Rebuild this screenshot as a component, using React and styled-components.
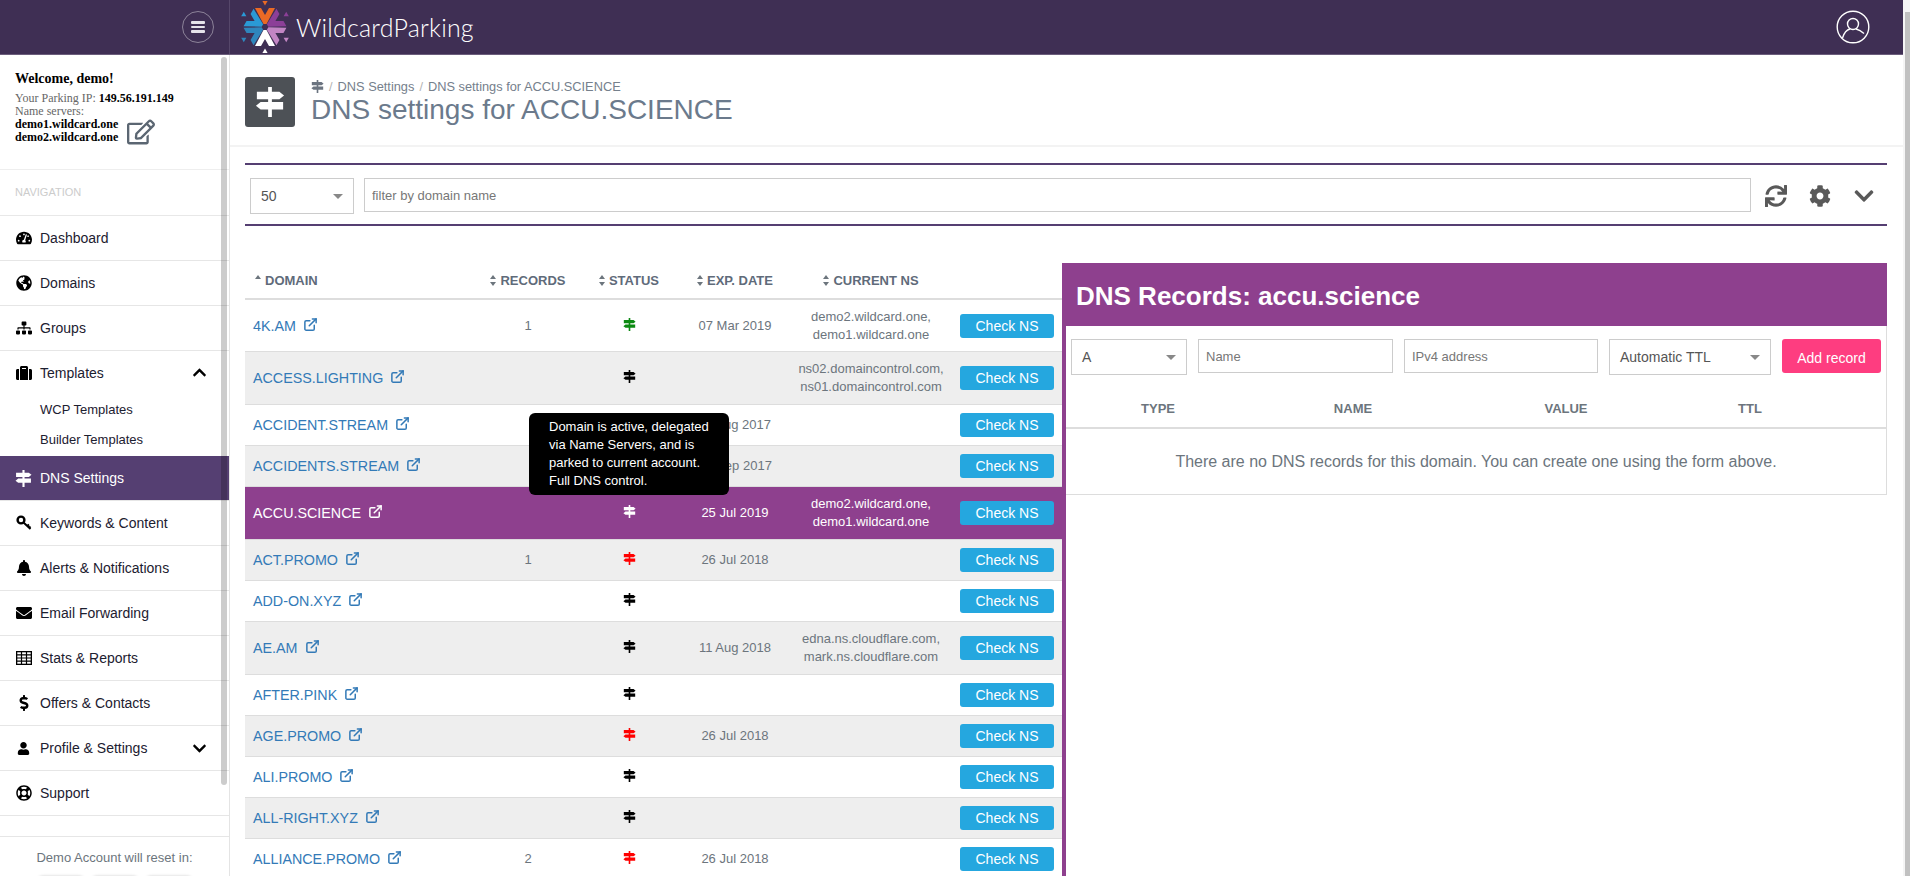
import React from "react";
import styled, { createGlobalStyle } from "styled-components";
import {
  FaTachometerAlt,
  FaGlobeAmericas,
  FaSitemap,
  FaSuitcase,
  FaBell,
  FaEnvelope,
  FaDollarSign,
  FaUser,
  FaRegLifeRing,
  FaChevronUp,
  FaChevronDown,
  FaRegEdit,
  FaSync,
  FaCog,
} from "react-icons/fa";
import { FiExternalLink } from "react-icons/fi";

const GlobalStyle = createGlobalStyle`
  html, body {
    margin: 0;
    height: 100%;
    overflow: hidden;
    background: #fff;
    font-family: "Liberation Sans", Arial, sans-serif;
  }
  * { box-sizing: border-box; }
`;

const Shell = styled.div`
  display: flex;
  height: 876px;
  overflow: hidden;
`;

const Page = styled.div`
  flex: 1;
  min-width: 0;
  display: flex;
  flex-direction: column;
`;

const PageScroll = styled.div`
  width: 7px;
  padding: 12px 0 0 2px;
  background: #f5f5f5;
`;

const PageThumb = styled.div`
  height: 100%;
  background: #c1c1c1;
`;

const TopBar = styled.header`
  height: 55px;
  flex: none;
  display: flex;
  align-items: center;
  background: #3f2f54;
  border-bottom: 1px solid #6b5d7c;
`;

const BurgerCell = styled.div`
  width: 230px;
  height: 54px;
  padding-right: 15px;
  display: flex;
  align-items: center;
  justify-content: flex-end;
  border-right: 1px solid #56476a;
`;

const Burger = styled.button`
  width: 32px;
  height: 32px;
  padding: 0;
  border-radius: 50%;
  border: 1px solid rgba(255, 255, 255, 0.4);
  background: transparent;
  display: flex;
  flex-direction: column;
  align-items: center;
  justify-content: center;
  gap: 2px;

  span {
    width: 14px;
    height: 2.5px;
    border-radius: 1px;
    background: #e6e3ea;
  }
`;

const Brand = styled.div`
  display: flex;
  align-items: center;
  margin-left: 10px;
  gap: 6px;
`;

const BrandName = styled.span`
  color: #fff;
  font-family: Lato, "Liberation Sans", sans-serif;
  font-weight: 300;
  font-size: 25px;
  line-height: 50px;
  letter-spacing: 0.2px;
`;

const UserButton = styled.div`
  margin-left: auto;
  margin-right: 33px;
  display: flex;
`;

const Body = styled.div`
  flex: 1;
  min-height: 0;
  display: flex;
`;

const Sidebar = styled.aside`
  position: relative;
  width: 230px;
  flex: none;
  overflow: hidden;
  border-right: 1px solid #e4e4e4;
`;

const SideThumb = styled.div`
  position: absolute;
  top: 2px;
  left: 221px;
  width: 6px;
  height: 728px;
  border-radius: 3px;
  background: rgba(0, 0, 0, 0.2);
`;

const Welcome = styled.div`
  height: 115px;
  padding: 16px 15px 0;
  font-family: "Liberation Serif", "Times New Roman", serif;
  font-size: 12px;
  line-height: 13px;
  color: #666;
  border-bottom: 1px solid #eee;
`;

const WelcomeTitle = styled.div`
  font-size: 14px;
  font-weight: bold;
  line-height: 16px;
  color: #000;
  margin-bottom: 5px;
`;

const Strong = styled.b`
  color: #000;
`;

const ServerRow = styled.div`
  display: flex;
  align-items: flex-end;
  gap: 9px;
`;

const EditIcon = styled(FaRegEdit)`
  font-size: 28px;
  color: #5b6672;
  margin-bottom: -2px;
`;

const SideHeading = styled.div`
  height: 46px;
  padding: 0 0 2px 15px;
  display: flex;
  align-items: center;
  font-size: 11px;
  color: #ccc;
  border-bottom: 1px solid #e8e8e8;
`;

const NavRow = styled.div`
  height: 45px;
  padding: 0 22px ${(p) => (p.$open ? 2 : 0)}px 15px;
  display: flex;
  align-items: center;
  font-size: 14px;
  color: ${(p) => (p.$active ? "#fff" : "#1c2030")};
  background: ${(p) => (p.$active ? "#553f72" : "transparent")};
  border-bottom: ${(p) => (p.$open ? "0" : "1px solid #e6e6e6")};
`;

const NavIcon = styled.span`
  width: 17px;
  margin-right: 8px;
  display: flex;
  justify-content: center;
  font-size: 16px;
  color: ${(p) => (p.$active ? "#fff" : "#000")};
`;

const NavArrow = styled.span`
  margin-left: auto;
  display: flex;
  font-size: 15px;
  color: #000;
`;

const SubNav = styled.div`
  height: 61px;
  padding: 0 0 0 40px;
  font-size: 13px;
  line-height: 30px;
  color: #1c2030;
  margin-top: -1px;
`;

const SideFooter = styled.div`
  margin-top: 20px;
  padding-top: 13px;
  font-size: 13px;
  line-height: 16px;
  text-align: center;
  color: #6c757d;
  border-top: 1px solid #e6e6e6;
`;

const Timer = styled.div`
  margin-top: 10px;
  display: flex;
  justify-content: center;
  gap: 6px;
`;

const TimerBox = styled.div`
  width: 48px;
  height: 40px;
  border-radius: 6px;
  background: #eee;
  box-shadow: 0 0 3px #ccc;
`;

const Main = styled.main`
  flex: 1;
  min-width: 0;
  display: flex;
  flex-direction: column;
`;

const PageHead = styled.div`
  height: 92px;
  flex: none;
  padding: 22px 0 0 15px;
  display: flex;
  gap: 16px;
  border-bottom: 2px solid #f3f3f3;
`;

const HeadIcon = styled.div`
  width: 50px;
  height: 50px;
  border-radius: 3px;
  background: #4d5156;
  display: flex;
  align-items: center;
  justify-content: center;
`;

const Crumbs = styled.div`
  display: flex;
  align-items: center;
  gap: 5px;
  height: 16px;
  margin-top: 1px;
  font-size: 12.8px;
  color: #75808c;
`;

const CrumbSep = styled.span`
  color: #b5b5b5;
`;

const PageTitle = styled.h1`
  margin: 1px 0 0;
  font-size: 28px;
  font-weight: normal;
  line-height: 30px;
  color: #6b7a8c;
`;

const Content = styled.div`
  flex: 1;
  min-height: 0;
  padding: 16px 16px 0 15px;
  display: flex;
  flex-direction: column;
`;

const Toolbar = styled.div`
  flex: none;
  height: 63px;
  padding: 13px 0 0 5px;
  display: flex;
  border-top: 2px solid #553f72;
  border-bottom: 2px solid #553f72;
`;

const SelectBox = styled.div`
  width: ${(p) => p.$w}px;
  height: 36px;
  flex: none;
  padding: 0 10px;
  display: flex;
  align-items: center;
  justify-content: space-between;
  font-size: 14px;
  color: #555;
  border: 1px solid #ccc;

  &::after {
    content: "";
    border-top: 5px solid #888;
    border-left: 5px solid transparent;
    border-right: 5px solid transparent;
  }
`;

const TextField = styled.input`
  height: ${(p) => p.$h || 34}px;
  width: ${(p) => (p.$w ? `${p.$w}px` : "auto")};
  flex: ${(p) => (p.$w ? "none" : 1)};
  min-width: 0;
  padding: 0 7px;
  font: 13px "Liberation Sans", Arial, sans-serif;
  border: 1px solid #ccc;
  outline: none;

  &::placeholder {
    color: #777;
    opacity: 1;
  }
`;

const FilterField = styled(TextField)`
  margin-left: 10px;
`;

const ToolIcons = styled.div`
  width: 136px;
  height: 36px;
  flex: none;
  padding: 0 12px 0 14px;
  display: flex;
  align-items: center;
  justify-content: space-between;
  font-size: 22px;
  color: #595959;
`;

const Split = styled.div`
  flex: 1;
  min-height: 0;
  margin-top: 37px;
  display: flex;
`;

const TableWrap = styled.div`
  position: relative;
  width: 817px;
  flex: none;
`;

const DomainTable = styled.table`
  width: 100%;
  table-layout: fixed;
  border-collapse: collapse;
  font-size: 13px;
  color: #6c757d;
`;

const HeadCell = styled.th`
  height: 36px;
  padding: ${(p) => (p.$left ? "0 0 0 10px" : "0")};
  text-align: ${(p) => (p.$left ? "left" : "center")};
  font-size: 13px;
  font-weight: bold;
  color: #5f6b7a;
  border-bottom: 2px solid #ddd;
`;

const SortMark = styled.span`
  display: inline-block;
  width: 7px;
  height: 11px;
  margin-right: 3px;
  vertical-align: -1px;
  position: relative;

  &::before,
  &::after {
    content: "";
    position: absolute;
    left: 0;
    border-left: 3.5px solid transparent;
    border-right: 3.5px solid transparent;
  }
  &::before {
    top: 0;
    border-bottom: 4px solid #6c757d;
  }
  &::after {
    bottom: 0;
    border-top: 4px solid #6c757d;
    display: ${(p) => (p.$upOnly ? "none" : "block")};
  }
`;

const Row = styled.tr`
  height: ${(p) => (p.$tall ? 52.75 : 41)}px;
  color: ${(p) => (p.$active ? "#fff" : "inherit")};

  &:nth-child(even) {
    background: #eee;
  }
  &&& {
    background: ${(p) => (p.$active ? "#8e408e" : "")};
  }
`;

const Cell = styled.td`
  padding: 0;
  line-height: 18px;
  text-align: center;
  border-bottom: 1px solid #ddd;
`;

const StatusMark = styled.span`
  display: inline-block;
  position: relative;
  top: 1px;
`;

const DomainCell = styled(Cell)`
  padding-left: 8px;
  text-align: left;
  font-size: 14.3px;
  color: ${(p) => (p.$active ? "#fff" : "#337ab7")};
`;

const ExtIcon = styled(FiExternalLink)`
  margin-left: 7px;
  font-size: 15px;
  stroke-width: 2.4;
  vertical-align: -1px;
`;

const CheckButton = styled.button`
  width: 94px;
  height: 24px;
  padding: 0;
  border: 0;
  border-radius: 3px;
  font: 14px "Liberation Sans", Arial, sans-serif;
  color: #fff;
  background: #25a7df;
  display: block;
  margin: 0 auto 0 7px;
`;

const Tooltip = styled.div`
  position: absolute;
  top: 150px;
  left: 284px;
  width: 200px;
  height: 82px;
  padding: 5px 20px;
  border-radius: 6px;
  font-size: 13px;
  line-height: 18px;
  color: #fff;
  background: #000;
`;

const Panel = styled.section`
  flex: 1;
  min-width: 0;
  display: flex;
  flex-direction: column;
`;

const PanelHead = styled.h2`
  flex: none;
  height: 63px;
  margin: 0;
  padding: 3px 0 0 14px;
  display: flex;
  align-items: center;
  font-size: 26px;
  font-weight: bold;
  color: #fff;
  background: #8e408e;
`;

const PanelBody = styled.div`
  flex: 1;
  border-left: 4px solid #8e408e;
`;

const PanelCard = styled.div`
  border-right: 1px solid #ddd;
  border-bottom: 1px solid #ddd;
`;

const RecordForm = styled.div`
  padding: 13px 0 0 5px;
  display: flex;
  gap: 11px;
`;

const AddButton = styled.button`
  width: 99px;
  height: 34px;
  flex: none;
  padding: 3px 0 0;
  border: 0;
  border-radius: 3px;
  font: 14px "Liberation Sans", Arial, sans-serif;
  color: #fff;
  background: #fe3d80;
`;

const RecordsTable = styled.table`
  width: 100%;
  table-layout: fixed;
  border-collapse: collapse;
`;

const RecordsHead = styled.th`
  height: 53px;
  padding: 15px 0 0;
  font-size: 13px;
  font-weight: bold;
  color: #6c757d;
  border-bottom: 2px solid #ddd;
`;

const EmptyCell = styled.td`
  height: 66px;
  padding: 0;
  text-align: center;
  font-size: 16px;
  color: #6c757d;
`;

const nav = [
  { label: "Dashboard", icon: <FaTachometerAlt /> },
  { label: "Domains", icon: <FaGlobeAmericas /> },
  { label: "Groups", icon: <FaSitemap /> },
  { label: "Templates", icon: <FaSuitcase />, open: true, arrow: <FaChevronUp /> },
  { label: "DNS Settings", icon: <SignPost color="#fff" size={17} />, active: true },
  { label: "Keywords & Content", icon: <KeyIcon /> },
  { label: "Alerts & Notifications", icon: <FaBell /> },
  { label: "Email Forwarding", icon: <FaEnvelope /> },
  { label: "Stats & Reports", icon: <GridIcon /> },
  { label: "Offers & Contacts", icon: <FaDollarSign /> },
  { label: "Profile & Settings", icon: <FaUser style={{ fontSize: 13 }} />, arrow: <FaChevronDown /> },
  { label: "Support", icon: <FaRegLifeRing /> },
];

const DEMO_NS = ["demo2.wildcard.one,", "demo1.wildcard.one"];

const domains = [
  { name: "4K.AM", records: "1", status: "#0b8a12", date: "07 Mar 2019", ns: DEMO_NS },
  { name: "ACCESS.LIGHTING", status: "#000", ns: ["ns02.domaincontrol.com,", "ns01.domaincontrol.com"] },
  { name: "ACCIDENT.STREAM", status: "#000", date: "11 Aug 2017" },
  { name: "ACCIDENTS.STREAM", status: "#000", date: "21 Sep 2017" },
  { name: "ACCU.SCIENCE", status: "#fff", date: "25 Jul 2019", ns: DEMO_NS, active: true },
  { name: "ACT.PROMO", records: "1", status: "#f00", date: "26 Jul 2018" },
  { name: "ADD-ON.XYZ", status: "#000" },
  { name: "AE.AM", status: "#000", date: "11 Aug 2018", ns: ["edna.ns.cloudflare.com,", "mark.ns.cloudflare.com"] },
  { name: "AFTER.PINK", status: "#000" },
  { name: "AGE.PROMO", status: "#f00", date: "26 Jul 2018" },
  { name: "ALI.PROMO", status: "#000" },
  { name: "ALL-RIGHT.XYZ", status: "#000" },
  { name: "ALLIANCE.PROMO", records: "2", status: "#f00", date: "26 Jul 2018" },
];

const columns = [
  { label: "Domain", width: 234, left: true, upOnly: true },
  { label: "Records", width: 98 },
  { label: "Status", width: 104 },
  { label: "Exp. Date", width: 108 },
  { label: "Current NS", width: 164 },
  { label: "", width: 109 },
];

function SignPost({ color, size }) {
  return (
    <svg width={size} height={size} viewBox="0 0 16 16" fill={color}>
      <rect x="7" y="0" width="2" height="16" />
      <polygon points="1,2.5 13,2.5 15.5,4.5 13,6.5 1,6.5" />
      <polygon points="15,8 3,8 0.5,10 3,12 15,12" />
    </svg>
  );
}

function KeyIcon() {
  return (
    <svg width="16" height="16" viewBox="0 0 16 16" fill="none" stroke="currentColor">
      <circle cx="5" cy="5" r="3.4" strokeWidth="2.4" />
      <path d="M7.5 7.5 L14.5 14 M11 11 L13 9.5 M13 13 L14.5 11.5" strokeWidth="2" />
    </svg>
  );
}

function GridIcon() {
  return (
    <svg width="16" height="14" viewBox="0 0 16 14" fill="none" stroke="currentColor" strokeWidth="1.2">
      <rect x="0.6" y="0.6" width="14.8" height="12.8" strokeWidth="1.4" />
      <path d="M0.6 3.8 H15.4 M0.6 7 H15.4 M0.6 10.2 H15.4 M5.5 0.6 V13.4 M10.5 0.6 V13.4" />
    </svg>
  );
}

function Logo() {
  const arms = [
    { angle: 0, color: "#ea6a25" },
    { angle: 60, color: "#8c3f98" },
    { angle: 120, color: "#c285c4" },
    { angle: 180, color: "#ffffff" },
    { angle: 240, color: "#2f86bd" },
    { angle: 300, color: "#2a9ad6" },
  ];
  return (
    <svg width="50" height="52" viewBox="-25 -26 50 52">
      {arms.map((arm) => (
        <g key={arm.angle} transform={`rotate(${arm.angle})`} fill={arm.color}>
          <polygon points="-10,-19 -4,-19 0,-12 4,-19 10,-19 1.5,-3 -1.5,-3" />
          <polygon points="-2.6,-26 2.6,-26 0,-21.5" />
        </g>
      ))}
    </svg>
  );
}

function UserIcon() {
  return (
    <svg width="34" height="34" viewBox="0 0 34 34" fill="none" stroke="#fff" strokeWidth="1.4">
      <circle cx="17" cy="17" r="15.8" />
      <circle cx="17" cy="14" r="5.5" />
      <path d="M6.5 28 Q9 20 14 19 M20 19 Q24 20 28 23.5" />
    </svg>
  );
}

function App() {
  return (
    <Shell>
      <GlobalStyle />
      <Page>
        <TopBar>
          <BurgerCell>
            <Burger aria-label="menu">
              <span />
              <span />
              <span />
            </Burger>
          </BurgerCell>
          <Brand>
            <Logo />
            <BrandName>WildcardParking</BrandName>
          </Brand>
          <UserButton>
            <UserIcon />
          </UserButton>
        </TopBar>
        <Body>
          <Sidebar>
            <Welcome>
              <WelcomeTitle>Welcome, demo!</WelcomeTitle>
              <div>
                Your Parking IP: <Strong>149.56.191.149</Strong>
              </div>
              <div>Name servers:</div>
              <ServerRow>
                <Strong>
                  demo1.wildcard.one
                  <br />
                  demo2.wildcard.one
                </Strong>
                <EditIcon />
              </ServerRow>
            </Welcome>
            <SideHeading>NAVIGATION</SideHeading>
            {nav.map((item) => (
              <React.Fragment key={item.label}>
                <NavRow $active={item.active} $open={item.open}>
                  <NavIcon $active={item.active}>{item.icon}</NavIcon>
                  {item.label}
                  {item.arrow && <NavArrow>{item.arrow}</NavArrow>}
                </NavRow>
                {item.open && (
                  <SubNav>
                    <div>WCP Templates</div>
                    <div>Builder Templates</div>
                  </SubNav>
                )}
              </React.Fragment>
            ))}
            <SideFooter>
              Demo Account will reset in:
              <Timer>
                <TimerBox />
                <TimerBox />
                <TimerBox />
              </Timer>
            </SideFooter>
            <SideThumb />
          </Sidebar>
          <Main>
            <PageHead>
              <HeadIcon>
                <SignPost color="#fff" size={30} />
              </HeadIcon>
              <div>
                <Crumbs>
                  <SignPost color="#6b7480" size={13} />
                  <CrumbSep>/</CrumbSep>
                  DNS Settings
                  <CrumbSep>/</CrumbSep>
                  DNS settings for ACCU.SCIENCE
                </Crumbs>
                <PageTitle>DNS settings for ACCU.SCIENCE</PageTitle>
              </div>
            </PageHead>
            <Content>
              <Toolbar>
                <SelectBox $w={104}>50</SelectBox>
                <FilterField $h={34} placeholder="filter by domain name" />
                <ToolIcons>
                  <FaSync />
                  <FaCog />
                  <FaChevronDown />
                </ToolIcons>
              </Toolbar>
              <Split>
                <TableWrap>
                  <DomainTable>
                    <colgroup>
                      {columns.map((col) => (
                        <col key={col.label} width={col.width} />
                      ))}
                    </colgroup>
                    <thead>
                      <tr>
                        {columns.map((col) => (
                          <HeadCell key={col.label} $left={col.left}>
                            {col.label && <SortMark $upOnly={col.upOnly} />}
                            {col.label.toUpperCase()}
                          </HeadCell>
                        ))}
                      </tr>
                    </thead>
                    <tbody>
                      {domains.map((d) => (
                        <Row key={d.name} $tall={!!d.ns} $active={d.active}>
                          <DomainCell $active={d.active}>
                            {d.name}
                            <ExtIcon />
                          </DomainCell>
                          <Cell>{d.records}</Cell>
                          <Cell>
                            <StatusMark>
                              <SignPost color={d.status} size={13} />
                            </StatusMark>
                          </Cell>
                          <Cell>{d.date}</Cell>
                          <Cell>
                            {d.ns &&
                              d.ns.map((line) => <div key={line}>{line}</div>)}
                          </Cell>
                          <Cell>
                            <CheckButton>Check NS</CheckButton>
                          </Cell>
                        </Row>
                      ))}
                    </tbody>
                  </DomainTable>
                  <Tooltip>
                    Domain is active, delegated via Name Servers, and is parked
                    to current account. Full DNS control.
                  </Tooltip>
                </TableWrap>
                <Panel>
                  <PanelHead>DNS Records: accu.science</PanelHead>
                  <PanelBody>
                    <PanelCard>
                      <RecordForm>
                        <SelectBox $w={116}>A</SelectBox>
                        <TextField $w={195} placeholder="Name" />
                        <TextField $w={194} placeholder="IPv4 address" />
                        <SelectBox $w={162}>Automatic TTL</SelectBox>
                        <AddButton>Add record</AddButton>
                      </RecordForm>
                      <RecordsTable>
                        <colgroup>
                          <col width={184} />
                          <col width={206} />
                          <col width={220} />
                          <col width={148} />
                          <col />
                        </colgroup>
                        <thead>
                          <tr>
                            <RecordsHead>TYPE</RecordsHead>
                            <RecordsHead>NAME</RecordsHead>
                            <RecordsHead>VALUE</RecordsHead>
                            <RecordsHead>TTL</RecordsHead>
                            <RecordsHead />
                          </tr>
                        </thead>
                        <tbody>
                          <tr>
                            <EmptyCell colSpan={5}>
                              There are no DNS records for this domain. You can
                              create one using the form above.
                            </EmptyCell>
                          </tr>
                        </tbody>
                      </RecordsTable>
                    </PanelCard>
                  </PanelBody>
                </Panel>
              </Split>
            </Content>
          </Main>
        </Body>
      </Page>
      <PageScroll>
        <PageThumb />
      </PageScroll>
    </Shell>
  );
}

export default App;
